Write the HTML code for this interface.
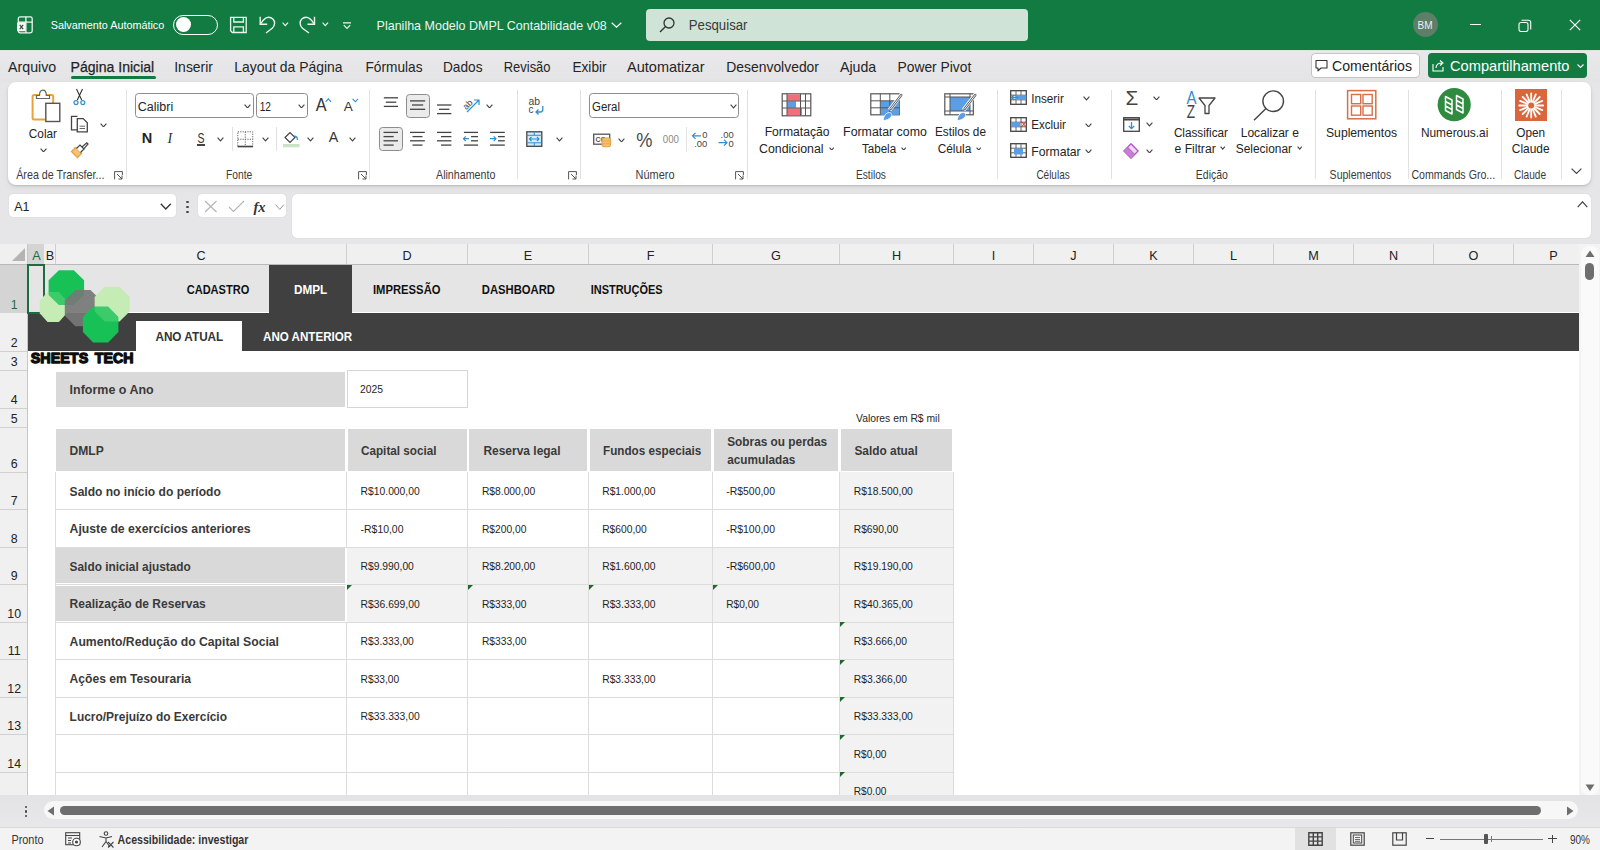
<!DOCTYPE html>
<html><head><meta charset="utf-8">
<style>
*{margin:0;padding:0;box-sizing:border-box}
html,body{width:1600px;height:850px;overflow:hidden;background:#e9e9eb;font-family:"Liberation Sans",sans-serif;color:#242424;position:relative}
.a{position:absolute;display:block}
.t{position:absolute;white-space:nowrap;line-height:1;transform-origin:0 0}
</style></head><body>
<div class="a" style="left:0px;top:0px;width:1600px;height:50px;background:#127b42;"></div>
<div class="a" style="left:0px;top:50px;width:1600px;height:32px;background:linear-gradient(#e9e8ec,#e4e4e5);"></div>
<div class="a" style="left:0px;top:50px;width:1600px;height:1px;background:#d5e8db;"></div>
<div class="a" style="left:0px;top:82px;width:1600px;height:162px;background:#e6e6e8;"></div>
<div class="a" style="left:8px;top:82px;width:1583px;height:103px;background:#ffffff;border-radius:8px;box-shadow:0 1px 2px rgba(0,0,0,.16),0 3px 6px rgba(0,0,0,.06)"></div>
<div class="a" style="left:9px;top:194px;width:167px;height:23px;background:#ffffff;border-radius:4px;box-shadow:0 0 1px rgba(0,0,0,.2)"></div>
<div class="a" style="left:198px;top:194px;width:88px;height:23px;background:#ffffff;border-radius:4px;box-shadow:0 0 1px rgba(0,0,0,.2)"></div>
<div class="a" style="left:292px;top:194px;width:1299px;height:44px;background:#ffffff;border-radius:5px;box-shadow:0 0 1px rgba(0,0,0,.2)"></div>
<div class="a" style="left:0px;top:244px;width:1579px;height:20px;background:#f0f0f0;"></div>
<div class="a" style="left:0px;top:264px;width:1579px;height:1px;background:#b9b9b9;"></div>
<div class="a" style="left:0px;top:265px;width:28px;height:530px;background:#f0f0f0;"></div>
<div class="a" style="left:27px;top:244px;width:1px;height:551px;background:#c6c6c6;"></div>
<div class="a" style="left:28px;top:265px;width:1551px;height:530px;background:#ffffff;"></div>
<div class="a" style="left:1579px;top:244px;width:21px;height:551px;background:#f3f3f3;"></div>
<div class="a" style="left:0px;top:827px;width:1600px;height:23px;background:#f3f3f3;"></div>
<div class="a" style="left:0px;top:827px;width:1600px;height:1px;background:#d9d9d9;"></div>
<div class="a" style="left:28px;top:265px;width:1551px;height:47px;background:#e5e5e5;"></div>
<div class="a" style="left:269px;top:265px;width:83px;height:48px;background:#404040;"></div>
<div class="a" style="left:28px;top:313px;width:1551px;height:38px;background:#404040;"></div>
<div class="a" style="left:136px;top:321px;width:106px;height:30px;background:#ffffff;"></div>
<div class="a" style="left:56px;top:372px;width:289px;height:35px;background:#d9d9d9;"></div>
<div class="a" style="left:347px;top:370px;width:121px;height:38px;background:#ffffff;border:1px solid #d6d6d6"></div>
<div class="a" style="left:840px;top:472px;width:113px;height:323px;background:#f2f2f2;"></div>
<div class="a" style="left:347px;top:547px;width:492px;height:75px;background:#f2f2f2;"></div>
<div class="a" style="left:55px;top:472px;width:1px;height:323px;background:#dcdcdc;"></div>
<div class="a" style="left:346px;top:472px;width:1px;height:323px;background:#dcdcdc;"></div>
<div class="a" style="left:467px;top:472px;width:1px;height:323px;background:#dcdcdc;"></div>
<div class="a" style="left:588px;top:472px;width:1px;height:323px;background:#dcdcdc;"></div>
<div class="a" style="left:712px;top:472px;width:1px;height:323px;background:#dcdcdc;"></div>
<div class="a" style="left:839px;top:472px;width:1px;height:323px;background:#dcdcdc;"></div>
<div class="a" style="left:953px;top:472px;width:1px;height:323px;background:#dcdcdc;"></div>
<div class="a" style="left:55px;top:509px;width:899px;height:1px;background:#dcdcdc;"></div>
<div class="a" style="left:55px;top:547px;width:899px;height:1px;background:#dcdcdc;"></div>
<div class="a" style="left:55px;top:584px;width:899px;height:1px;background:#dcdcdc;"></div>
<div class="a" style="left:55px;top:622px;width:899px;height:1px;background:#dcdcdc;"></div>
<div class="a" style="left:55px;top:659px;width:899px;height:1px;background:#dcdcdc;"></div>
<div class="a" style="left:55px;top:697px;width:899px;height:1px;background:#dcdcdc;"></div>
<div class="a" style="left:55px;top:734px;width:899px;height:1px;background:#dcdcdc;"></div>
<div class="a" style="left:55px;top:772px;width:899px;height:1px;background:#dcdcdc;"></div>
<div class="a" style="left:56px;top:429px;width:289px;height:42px;background:#d9d9d9;"></div>
<div class="a" style="left:348px;top:429px;width:119px;height:42px;background:#d9d9d9;"></div>
<div class="a" style="left:469px;top:429px;width:118px;height:42px;background:#d9d9d9;"></div>
<div class="a" style="left:590px;top:429px;width:121px;height:42px;background:#d9d9d9;"></div>
<div class="a" style="left:714px;top:429px;width:124px;height:42px;background:#d9d9d9;"></div>
<div class="a" style="left:841px;top:429px;width:111px;height:42px;background:#d9d9d9;"></div>
<div class="a" style="left:56px;top:548px;width:289px;height:35px;background:#d9d9d9;"></div>
<div class="a" style="left:56px;top:586px;width:289px;height:35px;background:#d9d9d9;"></div>
<div class="a" style="left:346px;top:548px;width:1px;height:74px;background:#ffffff;"></div>
<svg class="a" style="left:347px;top:584.5px;" width="5" height="5" viewBox="0 0 5 5"><path d="M0 0H5L0 5Z" fill="#1b6a2c"/></svg>
<svg class="a" style="left:468px;top:584.5px;" width="5" height="5" viewBox="0 0 5 5"><path d="M0 0H5L0 5Z" fill="#1b6a2c"/></svg>
<svg class="a" style="left:589px;top:584.5px;" width="5" height="5" viewBox="0 0 5 5"><path d="M0 0H5L0 5Z" fill="#1b6a2c"/></svg>
<svg class="a" style="left:713px;top:584.5px;" width="5" height="5" viewBox="0 0 5 5"><path d="M0 0H5L0 5Z" fill="#1b6a2c"/></svg>
<svg class="a" style="left:840px;top:622px;" width="5" height="5" viewBox="0 0 5 5"><path d="M0 0H5L0 5Z" fill="#1b6a2c"/></svg>
<svg class="a" style="left:840px;top:659.5px;" width="5" height="5" viewBox="0 0 5 5"><path d="M0 0H5L0 5Z" fill="#1b6a2c"/></svg>
<svg class="a" style="left:840px;top:697px;" width="5" height="5" viewBox="0 0 5 5"><path d="M0 0H5L0 5Z" fill="#1b6a2c"/></svg>
<svg class="a" style="left:840px;top:734.5px;" width="5" height="5" viewBox="0 0 5 5"><path d="M0 0H5L0 5Z" fill="#1b6a2c"/></svg>
<svg class="a" style="left:840px;top:772px;" width="5" height="5" viewBox="0 0 5 5"><path d="M0 0H5L0 5Z" fill="#1b6a2c"/></svg>
<div class="a" style="left:27px;top:264px;width:18px;height:50px;background:transparent;border:2px solid #1e6b41"></div>
<svg class="a" style="left:28px;top:264px;" width="110" height="86" viewBox="0 0 110 86"><polygon points="19.6,28.0 30.9,28.0 38.7,36.7 38.7,49.3 30.9,58.0 19.6,58.0 11.8,49.3 11.8,36.7" fill="#c6ecb4" fill-opacity="1"/><polygon points="30.9,6.2 45.8,6.2 56.1,16.3 56.1,31.0 45.8,41.1 30.9,41.1 20.6,31.0 20.6,16.3" fill="#17c155" fill-opacity="1"/><polygon points="19.6,28.0 30.9,28.0 38.7,36.7 38.7,49.3 30.9,58.0 19.6,58.0 11.8,49.3 11.8,36.7" fill="#c6ecb4" fill-opacity="0.22"/><polygon points="47.3,26.0 62.5,26.0 73.0,36.5 73.0,51.8 62.5,62.3 47.3,62.3 36.8,51.8 36.8,36.5" fill="#777777" fill-opacity="0.92"/><polygon points="76.8,23.0 91.5,23.0 101.6,33.0 101.6,47.4 91.5,57.4 76.8,57.4 66.7,47.4 66.7,33.0" fill="#c6ecb4" fill-opacity="1"/><polygon points="65.2,42.4 80.1,42.4 90.4,52.9 90.4,68.0 80.1,78.5 65.2,78.5 54.9,68.0 54.9,52.9" fill="#17c155" fill-opacity="1"/><polygon points="76.8,23.0 91.5,23.0 101.6,33.0 101.6,47.4 91.5,57.4 76.8,57.4 66.7,47.4 66.7,33.0" fill="#c6ecb4" fill-opacity="0.22"/></svg>
<div class="a" style="left:28px;top:244px;width:16px;height:20px;background:#d4d4d4;"></div>
<div class="a" style="left:55px;top:244px;width:1px;height:20px;background:#cfcfcf;"></div>
<div class="a" style="left:346px;top:244px;width:1px;height:20px;background:#cfcfcf;"></div>
<div class="a" style="left:467px;top:244px;width:1px;height:20px;background:#cfcfcf;"></div>
<div class="a" style="left:588px;top:244px;width:1px;height:20px;background:#cfcfcf;"></div>
<div class="a" style="left:712px;top:244px;width:1px;height:20px;background:#cfcfcf;"></div>
<div class="a" style="left:839px;top:244px;width:1px;height:20px;background:#cfcfcf;"></div>
<div class="a" style="left:953px;top:244px;width:1px;height:20px;background:#cfcfcf;"></div>
<div class="a" style="left:1033px;top:244px;width:1px;height:20px;background:#cfcfcf;"></div>
<div class="a" style="left:1113px;top:244px;width:1px;height:20px;background:#cfcfcf;"></div>
<div class="a" style="left:1193px;top:244px;width:1px;height:20px;background:#cfcfcf;"></div>
<div class="a" style="left:1273px;top:244px;width:1px;height:20px;background:#cfcfcf;"></div>
<div class="a" style="left:1353px;top:244px;width:1px;height:20px;background:#cfcfcf;"></div>
<div class="a" style="left:1433px;top:244px;width:1px;height:20px;background:#cfcfcf;"></div>
<div class="a" style="left:1513px;top:244px;width:1px;height:20px;background:#cfcfcf;"></div>
<div class="a" style="left:0px;top:265px;width:27px;height:48px;background:#d4d4d4;"></div>
<svg class="a" style="left:12px;top:248px;" width="14" height="14" viewBox="0 0 14 14"><path d="M13 0V13H0Z" fill="#b4b4b4"/></svg>
<div class="a" style="left:0px;top:351px;width:27px;height:1px;background:#d0d0d0;"></div>
<div class="a" style="left:0px;top:370px;width:27px;height:1px;background:#d0d0d0;"></div>
<div class="a" style="left:0px;top:408px;width:27px;height:1px;background:#d0d0d0;"></div>
<div class="a" style="left:0px;top:427px;width:27px;height:1px;background:#d0d0d0;"></div>
<div class="a" style="left:0px;top:472px;width:27px;height:1px;background:#d0d0d0;"></div>
<div class="a" style="left:0px;top:509px;width:27px;height:1px;background:#d0d0d0;"></div>
<div class="a" style="left:0px;top:547px;width:27px;height:1px;background:#d0d0d0;"></div>
<div class="a" style="left:0px;top:584px;width:27px;height:1px;background:#d0d0d0;"></div>
<div class="a" style="left:0px;top:622px;width:27px;height:1px;background:#d0d0d0;"></div>
<div class="a" style="left:0px;top:659px;width:27px;height:1px;background:#d0d0d0;"></div>
<div class="a" style="left:0px;top:697px;width:27px;height:1px;background:#d0d0d0;"></div>
<div class="a" style="left:0px;top:734px;width:27px;height:1px;background:#d0d0d0;"></div>
<div class="a" style="left:0px;top:772px;width:27px;height:1px;background:#d0d0d0;"></div>
<svg class="a" style="left:16px;top:16px;" width="18" height="18" viewBox="0 0 18 18"><rect x="2.3" y="0.9" width="13.9" height="16" rx="1.8" fill="none" stroke="#eaf7ee" stroke-width="1.3"/><path d="M9.9 0.9V16.9M2.3 6.2H16.2" stroke="#eaf7ee" stroke-width="1.3"/><rect x="1" y="6.2" width="8.7" height="9" rx="1.2" fill="#f4fbf6"/><path d="M3.8 8.8L7.2 13.2M7.2 8.8L3.8 13.2" stroke="#444" stroke-width="1.2"/></svg>
<div class="a" style="left:172.5px;top:14.5px;width:45.0px;height:20.0px;background:transparent;border:1.5px solid #fff;border-radius:10px"></div>
<div class="a" style="left:175.5px;top:17px;width:15.0px;height:15px;background:#ffffff;border-radius:50%"></div>
<svg class="a" style="left:226px;top:12px;" width="26" height="26" viewBox="0 0 26 26"><path d="M 4.60 5.30 H 20.20 V 20.50 H 6.30 L 4.60 18.80 Z" fill="none" stroke="#eaf7ee" stroke-width="1.3"/><path d="M 7.80 5.30 V 10.00 H 17.40 V 5.30 M 7.80 20.50 V 14.80 H 17.40 V 20.50" fill="none" stroke="#eaf7ee" stroke-width="1.3"/></svg>
<svg class="a" style="left:256px;top:12px;" width="24" height="26" viewBox="0 0 24 26"><path d="M 4.20 4.80 V 12.20 H 11.20" fill="none" stroke="#eaf7ee" stroke-width="1.4"/><path d="M 4.90 11.50 C 7.50 7.20 10.00 5.30 12.60 5.30 C 16.00 5.30 18.60 8.00 18.60 11.20 C 18.60 13.20 17.60 14.80 16.20 16.20 L 10.00 21.00" fill="none" stroke="#eaf7ee" stroke-width="1.4"/></svg>
<svg class="a" style="left:281.5px;top:22px;" width="7" height="5" viewBox="0 0 7 5"><path d="M0.6 0.6L3.3 3.6L6 0.6" fill="none" stroke="#eaf7ee" stroke-width="1.2"/></svg>
<svg class="a" style="left:296px;top:12px;" width="24" height="26" viewBox="0 0 24 26"><path d="M 18.50 4.80 V 12.20 H 11.50" fill="none" stroke="#eaf7ee" stroke-width="1.4"/><path d="M 17.80 11.50 C 15.20 7.20 12.70 5.30 10.10 5.30 C 6.70 5.30 4.10 8.00 4.10 11.20 C 4.10 13.20 5.10 14.80 6.50 16.20 L 13.00 21.00" fill="none" stroke="#eaf7ee" stroke-width="1.4"/></svg>
<svg class="a" style="left:321.5px;top:22px;" width="7" height="5" viewBox="0 0 7 5"><path d="M0.6 0.6L3.3 3.6L6 0.6" fill="none" stroke="#eaf7ee" stroke-width="1.2"/></svg>
<svg class="a" style="left:342px;top:21px;" width="10" height="9" viewBox="0 0 10 9"><path d="M1 1.8H9M1.8 4.2L5 7.4L8.2 4.2" fill="none" stroke="#eaf7ee" stroke-width="1.2"/></svg>
<svg class="a" style="left:611px;top:22px;" width="11" height="6" viewBox="0 0 11 6"><path d="M0.7 0.7L5.5 5.2L10.3 0.7" fill="none" stroke="#fff" stroke-width="1.2"/></svg>
<div class="a" style="left:645.5px;top:8.75px;width:382.0px;height:32.0px;background:#cfe4d6;border-radius:4px"></div>
<svg class="a" style="left:659px;top:17px;" width="16" height="16" viewBox="0 0 16 16"><circle cx="10" cy="6" r="5" fill="none" stroke="#333" stroke-width="1.3"/><path d="M6.3 9.7L1 15" stroke="#333" stroke-width="1.4"/></svg>
<div class="a" style="left:1412.5px;top:12px;width:25.0px;height:25px;background:#5e7e69;border-radius:50%"></div>
<div class="a" style="left:1469.5px;top:24px;width:11.0px;height:1.1999999999999993px;background:#ffffff;"></div>
<svg class="a" style="left:1518px;top:19px;" width="14" height="13" viewBox="0 0 14 13"><rect x="1" y="3.5" width="9" height="9" rx="2" fill="none" stroke="#fff" stroke-width="1.1"/><path d="M3.5 1.2H10.5C11.7 1.2 12.7 2.2 12.7 3.4V10.5" fill="none" stroke="#fff" stroke-width="1.1"/></svg>
<svg class="a" style="left:1569px;top:19px;" width="12" height="12" viewBox="0 0 12 12"><path d="M0.8 0.8L11.2 11.2M11.2 0.8L0.8 11.2" stroke="#fff" stroke-width="1.2"/></svg>
<div class="a" style="left:70.5px;top:76px;width:85.0px;height:3px;background:#127b42;border-radius:1.5px"></div>
<div class="a" style="left:1310.5px;top:53px;width:109.0px;height:25px;background:#ffffff;border:1px solid #c4c4c4;border-radius:4px"></div>
<svg class="a" style="left:1315px;top:59px;" width="13" height="13" viewBox="0 0 13 13"><path d="M1 1.5H12V9H6L3 11.8V9H1Z" fill="none" stroke="#333" stroke-width="1.1" stroke-linejoin="round"/></svg>
<div class="a" style="left:1428px;top:53px;width:159px;height:25px;background:#127b42;border-radius:4px"></div>
<svg class="a" style="left:1432px;top:59px;" width="13" height="13" viewBox="0 0 13 13"><path d="M1 5V12H11V8" fill="none" stroke="#fff" stroke-width="1.1"/><path d="M4 9C4 5.5 6.5 4 10 4M8 1.5L11 4L8 6.5" fill="none" stroke="#fff" stroke-width="1.1"/></svg>
<svg class="a" style="left:1577px;top:64px;" width="7" height="5" viewBox="0 0 7 5"><path d="M0.5 0.5L3.5 3.5L6.5 0.5" fill="none" stroke="#fff" stroke-width="1.1"/></svg>
<svg class="a" style="left:114px;top:170.5px;" width="9" height="9" viewBox="0 0 9 9"><path d="M0.6 8.4V0.6H8.4V4" fill="none" stroke="#555" stroke-width="1"/><path d="M3 3L8 8M8 4.5V8H4.5" fill="none" stroke="#555" stroke-width="1"/></svg>
<svg class="a" style="left:357.5px;top:170.5px;" width="9" height="9" viewBox="0 0 9 9"><path d="M0.6 8.4V0.6H8.4V4" fill="none" stroke="#555" stroke-width="1"/><path d="M3 3L8 8M8 4.5V8H4.5" fill="none" stroke="#555" stroke-width="1"/></svg>
<svg class="a" style="left:568.3px;top:170.5px;" width="9" height="9" viewBox="0 0 9 9"><path d="M0.6 8.4V0.6H8.4V4" fill="none" stroke="#555" stroke-width="1"/><path d="M3 3L8 8M8 4.5V8H4.5" fill="none" stroke="#555" stroke-width="1"/></svg>
<svg class="a" style="left:734.6px;top:170.5px;" width="9" height="9" viewBox="0 0 9 9"><path d="M0.6 8.4V0.6H8.4V4" fill="none" stroke="#555" stroke-width="1"/><path d="M3 3L8 8M8 4.5V8H4.5" fill="none" stroke="#555" stroke-width="1"/></svg>
<div class="a" style="left:126px;top:90px;width:1px;height:89px;background:#e1e1e1;"></div>
<div class="a" style="left:369px;top:90px;width:1px;height:89px;background:#e1e1e1;"></div>
<div class="a" style="left:516.5px;top:90px;width:1.0px;height:89px;background:#e1e1e1;"></div>
<div class="a" style="left:580px;top:90px;width:1px;height:89px;background:#e1e1e1;"></div>
<div class="a" style="left:747px;top:90px;width:1px;height:89px;background:#e1e1e1;"></div>
<div class="a" style="left:997px;top:90px;width:1px;height:89px;background:#e1e1e1;"></div>
<div class="a" style="left:1110.5px;top:90px;width:1.0px;height:89px;background:#e1e1e1;"></div>
<div class="a" style="left:1314.5px;top:90px;width:1.0px;height:89px;background:#e1e1e1;"></div>
<div class="a" style="left:1407.5px;top:90px;width:1.0px;height:89px;background:#e1e1e1;"></div>
<div class="a" style="left:1500.5px;top:90px;width:1.0px;height:89px;background:#e1e1e1;"></div>
<div class="a" style="left:1560.5px;top:90px;width:1.0px;height:89px;background:#e1e1e1;"></div>
<svg class="a" style="left:30px;top:89px;" width="32" height="34" viewBox="0 0 32 34"><rect x="2.6" y="5.9" width="20.6" height="24.5" rx="1.5" fill="#fff" stroke="#e8a33a" stroke-width="2"/><path d="M6.5 9.5V6.5H9.5C9.5 2.8 10.8 1.2 12.9 1.2C15 1.2 16.3 2.8 16.3 6.5H19.5V9.5Z" fill="#fff" stroke="#666" stroke-width="1.2"/><rect x="15.8" y="14.3" width="14" height="18.2" fill="#fff" stroke="#555" stroke-width="1.4"/></svg>
<svg class="a" style="left:39.6px;top:147.5px;" width="7" height="4.5" viewBox="0 0 7 4.5"><path d="M0.6 0.6L3.5 3.9L6.4 0.6" fill="none" stroke="#444" stroke-width="1.1"/></svg>
<svg class="a" style="left:73px;top:88px;" width="13" height="18" viewBox="0 0 13 18"><path d="M3.5 1L8.7 12M9.5 1L4.3 12" stroke="#333" stroke-width="1.1"/><circle cx="3" cy="14.6" r="2" fill="none" stroke="#2f8fd0" stroke-width="1.2"/><circle cx="9.8" cy="14.6" r="2" fill="none" stroke="#2f8fd0" stroke-width="1.2"/></svg>
<svg class="a" style="left:70px;top:115px;" width="19" height="19" viewBox="0 0 19 19"><path d="M8 14.8H1.5V1.3H7.5" fill="none" stroke="#444" stroke-width="1.3"/><path d="M7.3 3.6H13.2L17.3 7.7V16.8H7.3Z" fill="#fff" stroke="#444" stroke-width="1.3"/><path d="M9.5 11.2H15M9.5 13.5H15" stroke="#666" stroke-width="1"/></svg>
<svg class="a" style="left:100.3px;top:122.5px;" width="7" height="4.5" viewBox="0 0 7 4.5"><path d="M0.6 0.6L3.5 3.9L6.4 0.6" fill="none" stroke="#444" stroke-width="1.1"/></svg>
<svg class="a" style="left:70px;top:142px;" width="19" height="17" viewBox="0 0 19 17"><path d="M1.5 9.5L7.5 15.5L11.5 11.5L5.5 5.5Z" fill="#f6c27a" stroke="#e8a33a" stroke-width="1.3"/><path d="M6.5 6.5L10 3L14 7L10.5 10.5" fill="#fff" stroke="#444" stroke-width="1.2"/><path d="M12 5L16.8 0.8L18 2L13.8 6.8" fill="none" stroke="#444" stroke-width="1.2"/></svg>
<div class="a" style="left:135.25px;top:93.25px;width:118.5px;height:24.450000000000003px;background:#fff;border:1px solid #8d8d8d;border-radius:3.5px"></div>
<svg class="a" style="left:244.2px;top:103.7px;" width="7" height="4.5" viewBox="0 0 7 4.5"><path d="M0.6 0.6L3.5 3.9L6.4 0.6" fill="none" stroke="#444" stroke-width="1.1"/></svg>
<div class="a" style="left:256.4px;top:93.25px;width:51.30000000000001px;height:24.450000000000003px;background:#fff;border:1px solid #8d8d8d;border-radius:3.5px"></div>
<svg class="a" style="left:298.2px;top:103.7px;" width="7" height="4.5" viewBox="0 0 7 4.5"><path d="M0.6 0.6L3.5 3.9L6.4 0.6" fill="none" stroke="#444" stroke-width="1.1"/></svg>
<svg class="a" style="left:325px;top:98px;" width="7" height="5" viewBox="0 0 7 5"><path d="M0.6 3.8L3.3 0.8L6 3.8" fill="none" stroke="#2f8fd0" stroke-width="1.1"/></svg>
<svg class="a" style="left:352px;top:98px;" width="7" height="5" viewBox="0 0 7 5"><path d="M0.6 0.8L3.3 3.8L6 0.8" fill="none" stroke="#2f8fd0" stroke-width="1.1"/></svg>
<div class="a" style="left:196.75px;top:144.25px;width:8.25px;height:1.3499999999999943px;background:#444;"></div>
<svg class="a" style="left:216.8px;top:137.0px;" width="7" height="4.5" viewBox="0 0 7 4.5"><path d="M0.6 0.6L3.5 3.9L6.4 0.6" fill="none" stroke="#444" stroke-width="1.1"/></svg>
<div class="a" style="left:231.5px;top:127px;width:1.0px;height:24px;background:#e1e1e1;"></div>
<svg class="a" style="left:237px;top:130.5px;" width="17" height="17" viewBox="0 0 17 17"><path d="M0.8 0.8H15.7V15.7H0.8Z" fill="none" stroke="#666" stroke-width="1" stroke-dasharray="1.2 1.2"/><path d="M8.25 0.8V15.7M0.8 8.25H15.7" stroke="#666" stroke-width="1" stroke-dasharray="1.2 1.2"/><path d="M0.5 15.5H16" stroke="#444" stroke-width="1.6"/></svg>
<svg class="a" style="left:261.8px;top:137.0px;" width="7" height="4.5" viewBox="0 0 7 4.5"><path d="M0.6 0.6L3.5 3.9L6.4 0.6" fill="none" stroke="#444" stroke-width="1.1"/></svg>
<div class="a" style="left:276.3px;top:127px;width:1.0px;height:24px;background:#e1e1e1;"></div>
<svg class="a" style="left:283px;top:130.5px;" width="17" height="17" viewBox="0 0 17 17"><path d="M3 6.5L8 1.5L13 6.5L8 11.5Z" fill="#fff" stroke="#444" stroke-width="1.2" transform="translate(-1,0)"/><path d="M10.5 5.5C13 4.5 14.5 6 14.5 9" fill="none" stroke="#2f8fd0" stroke-width="1.3"/><rect x="0" y="13" width="16.5" height="3.3" fill="#c9e3c4"/></svg>
<svg class="a" style="left:306.8px;top:137.0px;" width="7" height="4.5" viewBox="0 0 7 4.5"><path d="M0.6 0.6L3.5 3.9L6.4 0.6" fill="none" stroke="#444" stroke-width="1.1"/></svg>
<svg class="a" style="left:349.2px;top:137.0px;" width="7" height="4.5" viewBox="0 0 7 4.5"><path d="M0.6 0.6L3.5 3.9L6.4 0.6" fill="none" stroke="#444" stroke-width="1.1"/></svg>
<svg class="a" style="left:380px;top:92px;" width="20" height="20" viewBox="0 0 20 20"><path d="M3.8 5.8H18" stroke="#444" stroke-width="1.3"/><path d="M5.8 10.2H16.3" stroke="#444" stroke-width="1.3"/><path d="M3.8 14.4H18" stroke="#444" stroke-width="1.3"/></svg>
<div class="a" style="left:405.5px;top:93.5px;width:24.0px;height:24.0px;background:#ebebeb;border:1px solid #8d8d8d;border-radius:3.5px"></div>
<svg class="a" style="left:405px;top:92px;" width="25" height="22" viewBox="0 0 25 22"><path d="M5 8.9H20.2" stroke="#444" stroke-width="1.3"/><path d="M7 13H18.2" stroke="#444" stroke-width="1.3"/><path d="M5 17.3H20.2" stroke="#444" stroke-width="1.3"/></svg>
<svg class="a" style="left:434px;top:92px;" width="20" height="25" viewBox="0 0 20 25"><path d="M3 13H17.4" stroke="#444" stroke-width="1.3"/><path d="M5 17.3H15.4" stroke="#444" stroke-width="1.3"/><path d="M3 21.6H17.4" stroke="#444" stroke-width="1.3"/></svg>
<svg class="a" style="left:462px;top:96px;" width="18" height="17" viewBox="0 0 18 17"><text x="0" y="12" font-size="9" font-family="Liberation Sans" fill="#444" transform="rotate(-45 5 8)">ab</text><path d="M5 16L16.5 4.5M12 4H17V9" fill="none" stroke="#2f8fd0" stroke-width="1.2"/></svg>
<svg class="a" style="left:485.5px;top:103.9px;" width="7" height="4.5" viewBox="0 0 7 4.5"><path d="M0.6 0.6L3.5 3.9L6.4 0.6" fill="none" stroke="#444" stroke-width="1.1"/></svg>
<svg class="a" style="left:527px;top:96px;" width="19" height="19" viewBox="0 0 19 19"><text x="1.5" y="9" font-size="10" font-family="Liberation Sans" fill="#444" textLength="11.5" lengthAdjust="spacingAndGlyphs">ab</text><text x="1.5" y="17.3" font-size="10" font-family="Liberation Sans" fill="#444">c</text><path d="M15.8 10V13.5C15.8 15.2 14.8 16 13.3 16H9M11.5 13.5L9 16L11.5 18.5" fill="none" stroke="#2f8fd0" stroke-width="1.3"/></svg>
<div class="a" style="left:378.6px;top:127.1px;width:24.19999999999999px;height:24.200000000000017px;background:#ebebeb;border:1px solid #8d8d8d;border-radius:3.5px"></div>
<svg class="a" style="left:378px;top:126px;" width="25" height="25" viewBox="0 0 25 25"><path d="M5.5 6.4H20" stroke="#444" stroke-width="1.3"/><path d="M5.5 10.6H15.7" stroke="#444" stroke-width="1.3"/><path d="M5.5 14.8H20" stroke="#444" stroke-width="1.3"/><path d="M5.5 19.1H15.7" stroke="#444" stroke-width="1.3"/></svg>
<svg class="a" style="left:408px;top:126px;" width="20" height="25" viewBox="0 0 20 25"><path d="M2 6.4H16.8" stroke="#444" stroke-width="1.3"/><path d="M4.5 10.6H14.5" stroke="#444" stroke-width="1.3"/><path d="M2 14.8H16.8" stroke="#444" stroke-width="1.3"/><path d="M4.5 19.1H14.5" stroke="#444" stroke-width="1.3"/></svg>
<svg class="a" style="left:435px;top:126px;" width="20" height="25" viewBox="0 0 20 25"><path d="M2 6.4H16.4" stroke="#444" stroke-width="1.3"/><path d="M6 10.6H16.4" stroke="#444" stroke-width="1.3"/><path d="M2 14.8H16.4" stroke="#444" stroke-width="1.3"/><path d="M6 19.1H16.4" stroke="#444" stroke-width="1.3"/></svg>
<svg class="a" style="left:462px;top:126px;" width="20" height="25" viewBox="0 0 20 25"><path d="M1.9 6.4H16" stroke="#444" stroke-width="1.3"/><path d="M1.9 19.1H16" stroke="#444" stroke-width="1.3"/><path d="M9 10.6H16" stroke="#444" stroke-width="1.3"/><path d="M9 14.8H16" stroke="#444" stroke-width="1.3"/><path d="M1.5 12.7H7M3.8 10.3L1.5 12.7L3.8 15.1" fill="none" stroke="#2f8fd0" stroke-width="1.2"/></svg>
<svg class="a" style="left:488px;top:126px;" width="20" height="25" viewBox="0 0 20 25"><path d="M2.1 6.4H16.8" stroke="#444" stroke-width="1.3"/><path d="M2.1 19.1H16.8" stroke="#444" stroke-width="1.3"/><path d="M10 10.6H16.8" stroke="#444" stroke-width="1.3"/><path d="M10 14.8H16.8" stroke="#444" stroke-width="1.3"/><path d="M2 12.7H8M5.7 10.3L8 12.7L5.7 15.1" fill="none" stroke="#2f8fd0" stroke-width="1.2"/></svg>
<svg class="a" style="left:526px;top:130.5px;" width="17" height="17" viewBox="0 0 17 17"><rect x="0.8" y="0.8" width="15" height="14.5" fill="#d6ebf7" stroke="#444" stroke-width="1.3"/><path d="M0.8 4.3H15.8M0.8 11.8H15.8M8.3 0.8V4.3M8.3 11.8V15.3" stroke="#2f8fd0" stroke-width="1"/><path d="M3.5 8H13M5.5 6L3.5 8L5.5 10M11 6L13 8L11 10" fill="none" stroke="#2f8fd0" stroke-width="1.1"/></svg>
<svg class="a" style="left:556.3px;top:137.1px;" width="7" height="4.5" viewBox="0 0 7 4.5"><path d="M0.6 0.6L3.5 3.9L6.4 0.6" fill="none" stroke="#444" stroke-width="1.1"/></svg>
<div class="a" style="left:589.2px;top:93.3px;width:149.54999999999995px;height:24.700000000000003px;background:#fff;border:1px solid #8d8d8d;border-radius:3.5px"></div>
<svg class="a" style="left:729.5px;top:104.0px;" width="7" height="4.5" viewBox="0 0 7 4.5"><path d="M0.6 0.6L3.5 3.9L6.4 0.6" fill="none" stroke="#444" stroke-width="1.1"/></svg>
<svg class="a" style="left:593px;top:133px;" width="19" height="15" viewBox="0 0 19 15"><rect x="0.7" y="1.2" width="16" height="10" fill="#fff" stroke="#555" stroke-width="1.3"/><text x="2.5" y="9" font-size="7" font-family="Liberation Sans" fill="#555" font-weight="700">CC</text><rect x="9" y="5" width="8.5" height="8.8" rx="2.5" fill="#f6c27a" stroke="#e8a33a" stroke-width="1.1"/><path d="M9 8H17.5M9 10.8H17.5" stroke="#e8a33a" stroke-width="0.9"/></svg>
<svg class="a" style="left:618.2px;top:137.5px;" width="7" height="4.5" viewBox="0 0 7 4.5"><path d="M0.6 0.6L3.5 3.9L6.4 0.6" fill="none" stroke="#444" stroke-width="1.1"/></svg>
<div class="a" style="left:685.5px;top:127px;width:1.0px;height:24.5px;background:#e1e1e1;"></div>
<svg class="a" style="left:691px;top:130px;" width="19" height="18" viewBox="0 0 19 18"><path d="M1.5 5.8H10M4.5 2.8L1.5 5.8L4.5 8.8" fill="none" stroke="#2f8fd0" stroke-width="1.2"/><text x="11.3" y="8.3" font-size="9.4" font-family="Liberation Sans" fill="#444">0</text><text x="3.2" y="16.8" font-size="9.4" font-family="Liberation Sans" fill="#444">.00</text></svg>
<svg class="a" style="left:717px;top:130px;" width="19" height="18" viewBox="0 0 19 18"><text x="3.6" y="8.3" font-size="9.4" font-family="Liberation Sans" fill="#444">.00</text><path d="M1.5 12.7H10M7 9.7L10 12.7L7 15.7" fill="none" stroke="#2f8fd0" stroke-width="1.2"/><text x="11.6" y="16.8" font-size="9.4" font-family="Liberation Sans" fill="#444">0</text></svg>
<svg class="a" style="left:781px;top:93px;" width="31" height="24" viewBox="0 0 31 24"><rect x="1.2" y="0.8" width="28.6" height="22" fill="#fff" stroke="#555" stroke-width="1.2"/><rect x="6" y="1.3" width="13" height="6.5" fill="#f0707a"/><rect x="6" y="8.3" width="9" height="6.5" fill="#5b9ee6"/><rect x="6" y="15.2" width="15" height="7" fill="#f0707a"/><path d="M1.2 8H29.8M1.2 15H29.8M6 0.8V22.8M19.5 0.8V22.8M24.5 0.8V22.8" stroke="#555" stroke-width="1"/></svg>
<svg class="a" style="left:828.5px;top:146.8px;" width="5.5" height="3.7" viewBox="0 0 5.5 3.7"><path d="M0.6 0.6L2.75 3.1L4.9 0.6" fill="none" stroke="#444" stroke-width="1.1"/></svg>
<svg class="a" style="left:870px;top:93px;" width="33" height="29" viewBox="0 0 33 29"><rect x="0.8" y="0.8" width="28.5" height="21" fill="#fff" stroke="#555" stroke-width="1.2"/><rect x="10.5" y="8" width="18.8" height="13.8" fill="#5b9ee6"/><path d="M0.8 7.8H29.3M0.8 14.8H29.3M10.3 0.8V21.8M19.8 0.8V21.8" stroke="#555" stroke-width="1"/><path d="M31.5 1.5L19.5 17" stroke="#fff" stroke-width="4"/><path d="M31.3 2L20.5 16" stroke="#555" stroke-width="2.4" stroke-linecap="round"/><path d="M31.3 2L20.5 16" stroke="#fff" stroke-width="1" stroke-linecap="round"/><path d="M13 27.5C14 23 15.5 20 19 19.5C21.5 19.5 22.5 22 21 24C19.5 26 16 27.5 13 27.5Z" fill="#5b9ee6" stroke="#fff" stroke-width="0.8"/></svg>
<svg class="a" style="left:901.1px;top:146.8px;" width="5.5" height="3.7" viewBox="0 0 5.5 3.7"><path d="M0.6 0.6L2.75 3.1L4.9 0.6" fill="none" stroke="#444" stroke-width="1.1"/></svg>
<svg class="a" style="left:944px;top:93px;" width="33" height="29" viewBox="0 0 33 29"><rect x="0.8" y="0.8" width="28.5" height="21" fill="#fff" stroke="#555" stroke-width="1.2"/><rect x="6" y="4" width="20" height="14" fill="#5b9ee6"/><path d="M0.8 4H29.3M0.8 18H29.3M6 0.8V21.8M26 0.8V21.8" stroke="#555" stroke-width="1"/><path d="M31.5 1.5L19.5 17" stroke="#fff" stroke-width="4"/><path d="M31.3 2L20.5 16" stroke="#555" stroke-width="2.4" stroke-linecap="round"/><path d="M31.3 2L20.5 16" stroke="#fff" stroke-width="1" stroke-linecap="round"/><path d="M13 27.5C14 23 15.5 20 19 19.5C21.5 19.5 22.5 22 21 24C19.5 26 16 27.5 13 27.5Z" fill="#5b9ee6" stroke="#fff" stroke-width="0.8"/></svg>
<svg class="a" style="left:975.9px;top:146.8px;" width="5.5" height="3.7" viewBox="0 0 5.5 3.7"><path d="M0.6 0.6L2.75 3.1L4.9 0.6" fill="none" stroke="#444" stroke-width="1.1"/></svg>
<svg class="a" style="left:1010px;top:89.8px;" width="17" height="16" viewBox="0 0 17 16"><rect x="0.7" y="0.7" width="15.6" height="13.6" fill="#fff" stroke="#444" stroke-width="1.3"/><path d="M0.7 5.2H16.3M0.7 9.8H16.3M6 0.7V14.3M11 0.7V14.3" stroke="#555" stroke-width="0.9"/><rect x="6" y="5.2" width="10.3" height="4.6" fill="#5b9ee6"/><path d="M1.5 7.5H8M4 5L1.5 7.5L4 10" fill="none" stroke="#2f8fd0" stroke-width="1.3"/></svg>
<svg class="a" style="left:1010px;top:116.8px;" width="17" height="16" viewBox="0 0 17 16"><rect x="0.7" y="0.7" width="15.6" height="13.6" fill="#fff" stroke="#444" stroke-width="1.3"/><path d="M0.7 5.2H16.3M0.7 9.8H16.3M6 0.7V14.3M11 0.7V14.3" stroke="#555" stroke-width="0.9"/><rect x="1" y="5.2" width="9" height="4.6" fill="#5b9ee6"/><path d="M11.5 4.5L16 10M16 4.5L11.5 10" stroke="#e04040" stroke-width="1.1"/></svg>
<svg class="a" style="left:1010px;top:143px;" width="17" height="16" viewBox="0 0 17 16"><rect x="0.7" y="0.7" width="15.6" height="13.6" fill="#fff" stroke="#444" stroke-width="1.3"/><path d="M0.7 5.2H16.3M0.7 9.8H16.3M6 0.7V14.3M11 0.7V14.3" stroke="#555" stroke-width="0.9"/><rect x="4" y="5.5" width="9" height="6" fill="#5b9ee6"/><path d="M3 -0.5H14" stroke="#2f8fd0" stroke-width="1"/></svg>
<svg class="a" style="left:1082.5px;top:96.0px;" width="7" height="4.5" viewBox="0 0 7 4.5"><path d="M0.6 0.6L3.5 3.9L6.4 0.6" fill="none" stroke="#444" stroke-width="1.1"/></svg>
<svg class="a" style="left:1085.3px;top:122.7px;" width="7" height="4.5" viewBox="0 0 7 4.5"><path d="M0.6 0.6L3.5 3.9L6.4 0.6" fill="none" stroke="#444" stroke-width="1.1"/></svg>
<svg class="a" style="left:1084.6px;top:148.6px;" width="7" height="4.5" viewBox="0 0 7 4.5"><path d="M0.6 0.6L3.5 3.9L6.4 0.6" fill="none" stroke="#444" stroke-width="1.1"/></svg>
<svg class="a" style="left:1152.75px;top:95.75px;" width="7" height="4.5" viewBox="0 0 7 4.5"><path d="M0.6 0.6L3.5 3.9L6.4 0.6" fill="none" stroke="#444" stroke-width="1.1"/></svg>
<svg class="a" style="left:1123px;top:117px;" width="17" height="15" viewBox="0 0 17 15"><rect x="0.7" y="0.7" width="15.6" height="13.6" fill="#fff" stroke="#444" stroke-width="1.3"/><path d="M0.7 2.5H16.3" stroke="#444" stroke-width="2"/><path d="M8.5 5V11.5M5.8 9L8.5 11.7L11.2 9" fill="none" stroke="#2f8fd0" stroke-width="1.3"/></svg>
<svg class="a" style="left:1146.25px;top:122.25px;" width="7" height="4.5" viewBox="0 0 7 4.5"><path d="M0.6 0.6L3.5 3.9L6.4 0.6" fill="none" stroke="#444" stroke-width="1.1"/></svg>
<svg class="a" style="left:1123px;top:143px;" width="16" height="16" viewBox="0 0 16 16"><path d="M8 0.8L15.2 8L8 15.2L0.8 8Z" fill="#f0d6f4" stroke="#b04fc0" stroke-width="1.3"/><path d="M4.4 4.4L11.6 11.6" stroke="#b04fc0" stroke-width="1.2"/><path d="M0.8 8L4.4 4.4L11.6 11.6L8 15.2Z" fill="#c77fd3"/></svg>
<svg class="a" style="left:1146.25px;top:148.75px;" width="7" height="4.5" viewBox="0 0 7 4.5"><path d="M0.6 0.6L3.5 3.9L6.4 0.6" fill="none" stroke="#444" stroke-width="1.1"/></svg>
<svg class="a" style="left:1198px;top:97px;" width="19" height="18" viewBox="0 0 19 18"><path d="M1 1H17L11 8.5V16.5H7V8.5Z" fill="#fff" stroke="#444" stroke-width="1.3" stroke-linejoin="round"/></svg>
<svg class="a" style="left:1220.0px;top:146.0px;" width="5.5" height="3.7" viewBox="0 0 5.5 3.7"><path d="M0.6 0.6L2.75 3.1L4.9 0.6" fill="none" stroke="#444" stroke-width="1.1"/></svg>
<svg class="a" style="left:1252px;top:89px;" width="33" height="33" viewBox="0 0 33 33"><circle cx="21.2" cy="12.2" r="10.3" fill="#fff" stroke="#444" stroke-width="1.4"/><path d="M14 19.6L2 31.3" stroke="#444" stroke-width="1.4"/></svg>
<svg class="a" style="left:1296.5px;top:146.0px;" width="5.5" height="3.7" viewBox="0 0 5.5 3.7"><path d="M0.6 0.6L2.75 3.1L4.9 0.6" fill="none" stroke="#444" stroke-width="1.1"/></svg>
<svg class="a" style="left:1346px;top:89px;" width="32" height="32" viewBox="0 0 32 32"><rect x="1.6" y="1.6" width="28.2" height="28.2" fill="none" stroke="#d86f48" stroke-width="1.5"/><rect x="5.5" y="5.5" width="9.2" height="9.2" fill="none" stroke="#d86f48" stroke-width="1.4"/><rect x="17" y="5.5" width="9.2" height="9.2" fill="none" stroke="#d86f48" stroke-width="1.4"/><rect x="5.5" y="17" width="9.2" height="9.2" fill="none" stroke="#d86f48" stroke-width="1.4"/><rect x="17" y="17" width="9.2" height="9.2" fill="none" stroke="#d86f48" stroke-width="1.4"/></svg>
<svg class="a" style="left:1437px;top:88px;" width="34" height="34" viewBox="0 0 34 34"><circle cx="17.2" cy="16.7" r="16.6" fill="#2f8b3f"/><path d="M8.5 8.5L15 12V26L8.5 22.5ZM8.5 13.5L15 17M8.5 18L15 21.5M19.5 7.5L26 11V25L19.5 21.5ZM19.5 12.5L26 16M19.5 17L26 20.5" fill="none" stroke="#fff" stroke-width="1.5" stroke-linejoin="round"/></svg>
<div class="a" style="left:1515px;top:88.5px;width:32.40000000000009px;height:32.900000000000006px;background:#d9663c;"></div>
<svg class="a" style="left:1515px;top:88.5px;" width="33" height="33" viewBox="0 0 33 33"><path d="M16.2 16.5L28.20 16.50" stroke="#fff" stroke-width="1.8" stroke-linecap="round"/><path d="M16.2 16.5L27.29 21.09" stroke="#fff" stroke-width="1.8" stroke-linecap="round"/><path d="M16.2 16.5L24.69 24.99" stroke="#fff" stroke-width="1.8" stroke-linecap="round"/><path d="M16.2 16.5L20.79 27.59" stroke="#fff" stroke-width="1.8" stroke-linecap="round"/><path d="M16.2 16.5L16.20 28.50" stroke="#fff" stroke-width="1.8" stroke-linecap="round"/><path d="M16.2 16.5L11.61 27.59" stroke="#fff" stroke-width="1.8" stroke-linecap="round"/><path d="M16.2 16.5L7.71 24.99" stroke="#fff" stroke-width="1.8" stroke-linecap="round"/><path d="M16.2 16.5L5.11 21.09" stroke="#fff" stroke-width="1.8" stroke-linecap="round"/><path d="M16.2 16.5L4.20 16.50" stroke="#fff" stroke-width="1.8" stroke-linecap="round"/><path d="M16.2 16.5L5.11 11.91" stroke="#fff" stroke-width="1.8" stroke-linecap="round"/><path d="M16.2 16.5L7.71 8.01" stroke="#fff" stroke-width="1.8" stroke-linecap="round"/><path d="M16.2 16.5L11.61 5.41" stroke="#fff" stroke-width="1.8" stroke-linecap="round"/><path d="M16.2 16.5L16.20 4.50" stroke="#fff" stroke-width="1.8" stroke-linecap="round"/><path d="M16.2 16.5L20.79 5.41" stroke="#fff" stroke-width="1.8" stroke-linecap="round"/><path d="M16.2 16.5L24.69 8.01" stroke="#fff" stroke-width="1.8" stroke-linecap="round"/><path d="M16.2 16.5L27.29 11.91" stroke="#fff" stroke-width="1.8" stroke-linecap="round"/><circle cx="16.2" cy="16.5" r="3" fill="#d9663c"/></svg>
<svg class="a" style="left:1570.7px;top:167.7px;" width="11" height="6" viewBox="0 0 11 6"><path d="M0.6 0.6L5.5 5.4L10.4 0.6" fill="none" stroke="#444" stroke-width="1.2"/></svg>
<svg class="a" style="left:159.5px;top:203px;" width="12" height="8" viewBox="0 0 12 8"><path d="M0.8 0.8L5.8 6L10.8 0.8" fill="none" stroke="#333" stroke-width="1.3"/></svg>
<div class="a" style="left:186px;top:200.5px;width:2.5px;height:2.1999999999999886px;background:#444;border-radius:50%"></div>
<div class="a" style="left:186px;top:205.5px;width:2.5px;height:2.1999999999999886px;background:#444;border-radius:50%"></div>
<div class="a" style="left:186px;top:210.5px;width:2.5px;height:2.1999999999999886px;background:#444;border-radius:50%"></div>
<svg class="a" style="left:204px;top:200px;" width="14" height="13" viewBox="0 0 14 13"><path d="M1 1L12.5 12M12.5 1L1 12" stroke="#b3b3b3" stroke-width="1.1"/></svg>
<svg class="a" style="left:228px;top:200px;" width="17" height="13" viewBox="0 0 17 13"><path d="M1 7L5.5 11.5L16 1" fill="none" stroke="#b3b3b3" stroke-width="1.1"/></svg>
<svg class="a" style="left:275px;top:203.5px;" width="9.5" height="6.5" viewBox="0 0 9.5 6.5"><path d="M0.6 0.6L4.75 5.4L8.9 0.6" fill="none" stroke="#999" stroke-width="1"/></svg>
<svg class="a" style="left:1577px;top:201px;" width="11" height="7" viewBox="0 0 11 7"><path d="M0.7 6.2L5.5 0.8L10.3 6.2" fill="none" stroke="#444" stroke-width="1.2"/></svg>
<div class="a" style="left:1581px;top:246px;width:18px;height:549px;background:#fafafa;border-radius:8px"></div>
<svg class="a" style="left:1585px;top:250px;" width="10" height="8" viewBox="0 0 10 8"><path d="M5 0.5L9.5 7H0.5Z" fill="#6e6e6e"/></svg>
<div class="a" style="left:1585px;top:262.5px;width:9px;height:17.5px;background:#6e6e6e;border-radius:4.5px"></div>
<svg class="a" style="left:1585px;top:783.5px;" width="10" height="8" viewBox="0 0 10 8"><path d="M5 7L9.5 0.5H0.5Z" fill="#6e6e6e"/></svg>
<svg class="a" style="left:65px;top:832px;" width="17" height="15" viewBox="0 0 17 15"><rect x="0.7" y="0.7" width="14" height="12" fill="none" stroke="#444" stroke-width="1.1"/><path d="M0.7 3.5H14.7M3 6H7M3 8.5H6M3 11H6" stroke="#444" stroke-width="1"/><circle cx="11.5" cy="10" r="3.8" fill="#fff" stroke="#444" stroke-width="1.1"/><circle cx="11.5" cy="10" r="1.6" fill="#444"/></svg>
<svg class="a" style="left:98px;top:831px;" width="17" height="17" viewBox="0 0 17 17"><circle cx="8" cy="2.5" r="1.8" fill="none" stroke="#444" stroke-width="1.1"/><path d="M1.5 5.5L8 7L14 5.5M8 7V10.5L4 16M8 10.5L12 16" fill="none" stroke="#444" stroke-width="1.1"/><path d="M10 11L15.5 16.5M15.5 11L10 16.5" stroke="#444" stroke-width="1.1"/></svg>
<div class="a" style="left:1295px;top:828px;width:41px;height:22px;background:#e1e1e1;"></div>
<svg class="a" style="left:1308px;top:832px;" width="15" height="14" viewBox="0 0 15 14"><path d="M0.8 0.8H14.2V13.2H0.8ZM0.8 4.9H14.2M0.8 9.1H14.2M5.3 0.8V13.2M9.7 0.8V13.2" fill="none" stroke="#444" stroke-width="1.4"/></svg>
<svg class="a" style="left:1350px;top:832px;" width="15" height="14" viewBox="0 0 15 14"><rect x="0.8" y="0.8" width="13.4" height="12.4" fill="none" stroke="#444" stroke-width="1.2"/><rect x="3.3" y="3" width="8.4" height="8" fill="none" stroke="#444" stroke-width="1"/><path d="M5 5.5H10M5 7.5H10M5 9.3H10" stroke="#444" stroke-width="0.8"/></svg>
<svg class="a" style="left:1392px;top:832px;" width="15" height="14" viewBox="0 0 15 14"><rect x="0.8" y="0.8" width="13.4" height="12.4" fill="none" stroke="#444" stroke-width="1.2"/><path d="M4.5 0.8V8H10.5V0.8" fill="none" stroke="#444" stroke-width="1.2"/></svg>
<div class="a" style="left:1426px;top:838.2px;width:8px;height:1.1999999999999318px;background:#444;"></div>
<div class="a" style="left:1439.5px;top:838.6px;width:103.5px;height:0.7999999999999545px;background:#777;"></div>
<div class="a" style="left:1483.8px;top:833.8px;width:4.400000000000091px;height:10.700000000000045px;background:#555;border-radius:1px"></div>
<div class="a" style="left:1490.8px;top:836px;width:1.0px;height:6px;background:#777;"></div>
<div class="a" style="left:1548px;top:838.2px;width:8.5px;height:1.1999999999999318px;background:#444;"></div>
<div class="a" style="left:1551.6px;top:834.5px;width:1.2000000000000455px;height:8.700000000000045px;background:#444;"></div>
<svg class="a" style="left:0;top:0;overflow:visible" width="1600" height="850" font-family="Liberation Sans"><text x="30.80" textLength="57.40" lengthAdjust="spacingAndGlyphs" y="362.80" font-size="14.83" font-weight="700" fill="#0d0d0d" style="stroke:#0d0d0d;stroke-width:1.3px;stroke-linejoin:round">SHEETS</text>
<text x="94.80" textLength="38.60" lengthAdjust="spacingAndGlyphs" y="362.80" font-size="14.83" font-weight="700" fill="#0d0d0d" style="stroke:#0d0d0d;stroke-width:1.3px;stroke-linejoin:round">TECH</text>
<text x="186.70" textLength="62.60" lengthAdjust="spacingAndGlyphs" y="293.80" font-size="12.50" font-weight="700" fill="#111111">CADASTRO</text>
<text x="294.00" textLength="33.30" lengthAdjust="spacingAndGlyphs" y="293.80" font-size="12.50" font-weight="700" fill="#ffffff">DMPL</text>
<text x="373.00" textLength="67.50" lengthAdjust="spacingAndGlyphs" y="293.80" font-size="12.50" font-weight="700" fill="#111111">IMPRESSÃO</text>
<text x="481.75" textLength="73.25" lengthAdjust="spacingAndGlyphs" y="293.80" font-size="12.50" font-weight="700" fill="#111111">DASHBOARD</text>
<text x="590.75" textLength="71.75" lengthAdjust="spacingAndGlyphs" y="293.80" font-size="12.50" font-weight="700" fill="#111111">INSTRUÇÕES</text>
<text x="155.40" textLength="67.90" lengthAdjust="spacingAndGlyphs" y="341.30" font-size="12.94" font-weight="700" fill="#333333">ANO ATUAL</text>
<text x="263.00" textLength="89.20" lengthAdjust="spacingAndGlyphs" y="341.30" font-size="12.94" font-weight="700" fill="#ffffff">ANO ANTERIOR</text>
<text x="69.60" textLength="84.10" lengthAdjust="spacingAndGlyphs" y="394.00" font-size="13.52" font-weight="700" fill="#3a3a3a">Informe o Ano</text>
<text x="360.00" textLength="23.00" lengthAdjust="spacingAndGlyphs" y="393.00" font-size="10.90" font-weight="400" fill="#262626">2025</text>
<text x="856.00" textLength="83.70" lengthAdjust="spacingAndGlyphs" y="421.90" font-size="11.05" font-weight="400" fill="#262626">Valores em R$ mil</text>
<text x="69.60" textLength="34.20" lengthAdjust="spacingAndGlyphs" y="455.00" font-size="13.52" font-weight="700" fill="#3a3a3a">DMLP</text>
<text x="361.00" textLength="75.50" lengthAdjust="spacingAndGlyphs" y="455.00" font-size="13.52" font-weight="700" fill="#3a3a3a">Capital social</text>
<text x="483.40" textLength="77.20" lengthAdjust="spacingAndGlyphs" y="455.00" font-size="13.52" font-weight="700" fill="#3a3a3a">Reserva legal</text>
<text x="603.00" textLength="98.25" lengthAdjust="spacingAndGlyphs" y="455.00" font-size="13.52" font-weight="700" fill="#3a3a3a">Fundos especiais</text>
<text x="727.20" textLength="100.00" lengthAdjust="spacingAndGlyphs" y="445.80" font-size="13.52" font-weight="700" fill="#3a3a3a">Sobras ou perdas</text>
<text x="727.20" textLength="68.10" lengthAdjust="spacingAndGlyphs" y="463.60" font-size="13.52" font-weight="700" fill="#3a3a3a">acumuladas</text>
<text x="854.40" textLength="63.40" lengthAdjust="spacingAndGlyphs" y="455.00" font-size="13.52" font-weight="700" fill="#3a3a3a">Saldo atual</text>
<text x="69.60" textLength="151.20" lengthAdjust="spacingAndGlyphs" y="495.70" font-size="13.52" font-weight="700" fill="#3a3a3a">Saldo no início do período</text>
<text x="69.60" textLength="180.90" lengthAdjust="spacingAndGlyphs" y="533.20" font-size="13.52" font-weight="700" fill="#3a3a3a">Ajuste de exercícios anteriores</text>
<text x="69.60" textLength="121.20" lengthAdjust="spacingAndGlyphs" y="570.70" font-size="13.52" font-weight="700" fill="#3a3a3a">Saldo inicial ajustado</text>
<text x="69.60" textLength="136.20" lengthAdjust="spacingAndGlyphs" y="608.20" font-size="13.52" font-weight="700" fill="#3a3a3a">Realização de Reservas</text>
<text x="69.60" textLength="209.40" lengthAdjust="spacingAndGlyphs" y="645.70" font-size="13.52" font-weight="700" fill="#3a3a3a">Aumento/Redução do Capital Social</text>
<text x="69.60" textLength="121.40" lengthAdjust="spacingAndGlyphs" y="683.20" font-size="13.52" font-weight="700" fill="#3a3a3a">Ações em Tesouraria</text>
<text x="69.60" textLength="157.40" lengthAdjust="spacingAndGlyphs" y="720.70" font-size="13.52" font-weight="700" fill="#3a3a3a">Lucro/Prejuízo do Exercício</text>
<text x="360.60" textLength="59.12" lengthAdjust="spacingAndGlyphs" y="495.20" font-size="11.34" font-weight="400" fill="#1f1f1f">R$10.000,00</text>
<text x="481.90" textLength="53.25" lengthAdjust="spacingAndGlyphs" y="495.20" font-size="11.34" font-weight="400" fill="#1f1f1f">R$8.000,00</text>
<text x="602.20" textLength="53.25" lengthAdjust="spacingAndGlyphs" y="495.20" font-size="11.34" font-weight="400" fill="#1f1f1f">R$1.000,00</text>
<text x="726.25" textLength="48.73" lengthAdjust="spacingAndGlyphs" y="495.20" font-size="11.34" font-weight="400" fill="#1f1f1f">-R$500,00</text>
<text x="853.75" textLength="59.12" lengthAdjust="spacingAndGlyphs" y="495.20" font-size="11.34" font-weight="400" fill="#1f1f1f">R$18.500,00</text>
<text x="360.60" textLength="42.85" lengthAdjust="spacingAndGlyphs" y="532.70" font-size="11.34" font-weight="400" fill="#1f1f1f">-R$10,00</text>
<text x="481.90" textLength="44.48" lengthAdjust="spacingAndGlyphs" y="532.70" font-size="11.34" font-weight="400" fill="#1f1f1f">R$200,00</text>
<text x="602.20" textLength="44.48" lengthAdjust="spacingAndGlyphs" y="532.70" font-size="11.34" font-weight="400" fill="#1f1f1f">R$600,00</text>
<text x="726.25" textLength="48.73" lengthAdjust="spacingAndGlyphs" y="532.70" font-size="11.34" font-weight="400" fill="#1f1f1f">-R$100,00</text>
<text x="853.75" textLength="44.48" lengthAdjust="spacingAndGlyphs" y="532.70" font-size="11.34" font-weight="400" fill="#1f1f1f">R$690,00</text>
<text x="360.60" textLength="53.25" lengthAdjust="spacingAndGlyphs" y="570.20" font-size="11.34" font-weight="400" fill="#1f1f1f">R$9.990,00</text>
<text x="481.90" textLength="53.25" lengthAdjust="spacingAndGlyphs" y="570.20" font-size="11.34" font-weight="400" fill="#1f1f1f">R$8.200,00</text>
<text x="602.20" textLength="53.25" lengthAdjust="spacingAndGlyphs" y="570.20" font-size="11.34" font-weight="400" fill="#1f1f1f">R$1.600,00</text>
<text x="726.25" textLength="48.73" lengthAdjust="spacingAndGlyphs" y="570.20" font-size="11.34" font-weight="400" fill="#1f1f1f">-R$600,00</text>
<text x="853.75" textLength="59.12" lengthAdjust="spacingAndGlyphs" y="570.20" font-size="11.34" font-weight="400" fill="#1f1f1f">R$19.190,00</text>
<text x="360.60" textLength="59.12" lengthAdjust="spacingAndGlyphs" y="607.70" font-size="11.34" font-weight="400" fill="#1f1f1f">R$36.699,00</text>
<text x="481.90" textLength="44.48" lengthAdjust="spacingAndGlyphs" y="607.70" font-size="11.34" font-weight="400" fill="#1f1f1f">R$333,00</text>
<text x="602.20" textLength="53.25" lengthAdjust="spacingAndGlyphs" y="607.70" font-size="11.34" font-weight="400" fill="#1f1f1f">R$3.333,00</text>
<text x="726.25" textLength="32.73" lengthAdjust="spacingAndGlyphs" y="607.70" font-size="11.34" font-weight="400" fill="#1f1f1f">R$0,00</text>
<text x="853.75" textLength="59.12" lengthAdjust="spacingAndGlyphs" y="607.70" font-size="11.34" font-weight="400" fill="#1f1f1f">R$40.365,00</text>
<text x="360.60" textLength="53.25" lengthAdjust="spacingAndGlyphs" y="645.20" font-size="11.34" font-weight="400" fill="#1f1f1f">R$3.333,00</text>
<text x="481.90" textLength="44.48" lengthAdjust="spacingAndGlyphs" y="645.20" font-size="11.34" font-weight="400" fill="#1f1f1f">R$333,00</text>
<text x="853.75" textLength="53.25" lengthAdjust="spacingAndGlyphs" y="645.20" font-size="11.34" font-weight="400" fill="#1f1f1f">R$3.666,00</text>
<text x="360.60" textLength="38.60" lengthAdjust="spacingAndGlyphs" y="682.70" font-size="11.34" font-weight="400" fill="#1f1f1f">R$33,00</text>
<text x="602.20" textLength="53.25" lengthAdjust="spacingAndGlyphs" y="682.70" font-size="11.34" font-weight="400" fill="#1f1f1f">R$3.333,00</text>
<text x="853.75" textLength="53.25" lengthAdjust="spacingAndGlyphs" y="682.70" font-size="11.34" font-weight="400" fill="#1f1f1f">R$3.366,00</text>
<text x="360.60" textLength="59.12" lengthAdjust="spacingAndGlyphs" y="720.20" font-size="11.34" font-weight="400" fill="#1f1f1f">R$33.333,00</text>
<text x="853.75" textLength="59.12" lengthAdjust="spacingAndGlyphs" y="720.20" font-size="11.34" font-weight="400" fill="#1f1f1f">R$33.333,00</text>
<text x="853.75" textLength="32.73" lengthAdjust="spacingAndGlyphs" y="757.70" font-size="11.34" font-weight="400" fill="#1f1f1f">R$0,00</text>
<text x="853.75" textLength="32.73" lengthAdjust="spacingAndGlyphs" y="795.20" font-size="11.34" font-weight="400" fill="#1f1f1f">R$0,00</text>
<text x="36.50" text-anchor="middle" y="259.80" font-size="12.65" font-weight="400" fill="#1e6b41">A</text>
<text x="50.00" text-anchor="middle" y="259.80" font-size="12.65" font-weight="400" fill="#222222">B</text>
<text x="201.00" text-anchor="middle" y="259.80" font-size="12.65" font-weight="400" fill="#222222">C</text>
<text x="407.00" text-anchor="middle" y="259.80" font-size="12.65" font-weight="400" fill="#222222">D</text>
<text x="528.00" text-anchor="middle" y="259.80" font-size="12.65" font-weight="400" fill="#222222">E</text>
<text x="650.50" text-anchor="middle" y="259.80" font-size="12.65" font-weight="400" fill="#222222">F</text>
<text x="776.00" text-anchor="middle" y="259.80" font-size="12.65" font-weight="400" fill="#222222">G</text>
<text x="896.50" text-anchor="middle" y="259.80" font-size="12.65" font-weight="400" fill="#222222">H</text>
<text x="993.50" text-anchor="middle" y="259.80" font-size="12.65" font-weight="400" fill="#222222">I</text>
<text x="1073.50" text-anchor="middle" y="259.80" font-size="12.65" font-weight="400" fill="#222222">J</text>
<text x="1153.50" text-anchor="middle" y="259.80" font-size="12.65" font-weight="400" fill="#222222">K</text>
<text x="1233.50" text-anchor="middle" y="259.80" font-size="12.65" font-weight="400" fill="#222222">L</text>
<text x="1313.50" text-anchor="middle" y="259.80" font-size="12.65" font-weight="400" fill="#222222">M</text>
<text x="1393.50" text-anchor="middle" y="259.80" font-size="12.65" font-weight="400" fill="#222222">N</text>
<text x="1473.50" text-anchor="middle" y="259.80" font-size="12.65" font-weight="400" fill="#222222">O</text>
<text x="1553.50" text-anchor="middle" y="259.80" font-size="12.65" font-weight="400" fill="#222222">P</text>
<text x="14.20" text-anchor="middle" y="309.40" font-size="12.35" font-weight="400" fill="#1e6b41">1</text>
<text x="14.20" text-anchor="middle" y="347.40" font-size="12.35" font-weight="400" fill="#222222">2</text>
<text x="14.20" text-anchor="middle" y="366.40" font-size="12.35" font-weight="400" fill="#222222">3</text>
<text x="14.20" text-anchor="middle" y="404.40" font-size="12.35" font-weight="400" fill="#222222">4</text>
<text x="14.20" text-anchor="middle" y="423.40" font-size="12.35" font-weight="400" fill="#222222">5</text>
<text x="14.20" text-anchor="middle" y="468.40" font-size="12.35" font-weight="400" fill="#222222">6</text>
<text x="14.20" text-anchor="middle" y="505.40" font-size="12.35" font-weight="400" fill="#222222">7</text>
<text x="14.20" text-anchor="middle" y="543.40" font-size="12.35" font-weight="400" fill="#222222">8</text>
<text x="14.20" text-anchor="middle" y="580.40" font-size="12.35" font-weight="400" fill="#222222">9</text>
<text x="14.20" text-anchor="middle" y="618.40" font-size="12.35" font-weight="400" fill="#222222">10</text>
<text x="14.20" text-anchor="middle" y="655.40" font-size="12.35" font-weight="400" fill="#222222">11</text>
<text x="14.20" text-anchor="middle" y="693.40" font-size="12.35" font-weight="400" fill="#222222">12</text>
<text x="14.20" text-anchor="middle" y="730.40" font-size="12.35" font-weight="400" fill="#222222">13</text>
<text x="14.20" text-anchor="middle" y="768.40" font-size="12.35" font-weight="400" fill="#222222">14</text>
<text x="50.75" textLength="113.50" lengthAdjust="spacingAndGlyphs" y="29.20" font-size="11.34" font-weight="400" fill="#ffffff">Salvamento Automático</text>
<text x="376.60" textLength="230.20" lengthAdjust="spacingAndGlyphs" y="29.60" font-size="12.72" font-weight="400" fill="#eaf6ee">Planilha Modelo DMPL Contabilidade v08</text>
<text x="688.75" textLength="58.75" lengthAdjust="spacingAndGlyphs" y="29.50" font-size="15.26" font-weight="400" fill="#3a3a3a">Pesquisar</text>
<text x="1417.50" textLength="15.00" lengthAdjust="spacingAndGlyphs" y="28.80" font-size="10.47" font-weight="400" fill="#f0f0f0">BM</text>
<text x="8.00" textLength="48.25" lengthAdjust="spacingAndGlyphs" y="71.80" font-size="15.41" font-weight="400" fill="#242424">Arquivo</text>
<text x="70.50" textLength="83.75" lengthAdjust="spacingAndGlyphs" y="71.80" font-size="15.41" fill="#1f1f1f" font-weight="400" style="stroke:#1f1f1f;stroke-width:0.25px">Página Inicial</text>
<text x="174.25" textLength="38.75" lengthAdjust="spacingAndGlyphs" y="71.80" font-size="15.41" font-weight="400" fill="#242424">Inserir</text>
<text x="234.25" textLength="108.25" lengthAdjust="spacingAndGlyphs" y="71.80" font-size="15.41" font-weight="400" fill="#242424">Layout da Página</text>
<text x="365.50" textLength="57.00" lengthAdjust="spacingAndGlyphs" y="71.80" font-size="15.41" font-weight="400" fill="#242424">Fórmulas</text>
<text x="443.00" textLength="39.50" lengthAdjust="spacingAndGlyphs" y="71.80" font-size="15.41" font-weight="400" fill="#242424">Dados</text>
<text x="503.75" textLength="46.75" lengthAdjust="spacingAndGlyphs" y="71.80" font-size="15.41" font-weight="400" fill="#242424">Revisão</text>
<text x="572.50" textLength="34.00" lengthAdjust="spacingAndGlyphs" y="71.80" font-size="15.41" font-weight="400" fill="#242424">Exibir</text>
<text x="627.00" textLength="77.50" lengthAdjust="spacingAndGlyphs" y="71.80" font-size="15.41" font-weight="400" fill="#242424">Automatizar</text>
<text x="726.25" textLength="92.75" lengthAdjust="spacingAndGlyphs" y="71.80" font-size="15.41" font-weight="400" fill="#242424">Desenvolvedor</text>
<text x="840.00" textLength="36.25" lengthAdjust="spacingAndGlyphs" y="71.80" font-size="15.41" font-weight="400" fill="#242424">Ajuda</text>
<text x="897.50" textLength="73.75" lengthAdjust="spacingAndGlyphs" y="71.80" font-size="15.41" font-weight="400" fill="#242424">Power Pivot</text>
<text x="1332.00" textLength="80.00" lengthAdjust="spacingAndGlyphs" y="71.25" font-size="15.41" font-weight="400" fill="#242424">Comentários</text>
<text x="1450.00" textLength="119.50" lengthAdjust="spacingAndGlyphs" y="71.25" font-size="15.41" font-weight="400" fill="#ffffff">Compartilhamento</text>
<text x="16.20" textLength="88.30" lengthAdjust="spacingAndGlyphs" y="178.80" font-size="11.92" font-weight="400" fill="#3b3b3b">Área de Transfer...</text>
<text x="226.00" textLength="26.30" lengthAdjust="spacingAndGlyphs" y="178.80" font-size="11.92" font-weight="400" fill="#3b3b3b">Fonte</text>
<text x="436.00" textLength="59.40" lengthAdjust="spacingAndGlyphs" y="178.80" font-size="11.92" font-weight="400" fill="#3b3b3b">Alinhamento</text>
<text x="635.60" textLength="38.90" lengthAdjust="spacingAndGlyphs" y="178.80" font-size="11.92" font-weight="400" fill="#3b3b3b">Número</text>
<text x="855.90" textLength="30.10" lengthAdjust="spacingAndGlyphs" y="178.80" font-size="11.92" font-weight="400" fill="#3b3b3b">Estilos</text>
<text x="1036.40" textLength="33.30" lengthAdjust="spacingAndGlyphs" y="178.80" font-size="11.92" font-weight="400" fill="#3b3b3b">Células</text>
<text x="1195.80" textLength="32.10" lengthAdjust="spacingAndGlyphs" y="178.80" font-size="11.92" font-weight="400" fill="#3b3b3b">Edição</text>
<text x="1329.60" textLength="61.60" lengthAdjust="spacingAndGlyphs" y="178.80" font-size="11.92" font-weight="400" fill="#3b3b3b">Suplementos</text>
<text x="1411.40" textLength="83.80" lengthAdjust="spacingAndGlyphs" y="178.80" font-size="11.92" font-weight="400" fill="#3b3b3b">Commands Gro...</text>
<text x="1514.00" textLength="32.00" lengthAdjust="spacingAndGlyphs" y="178.80" font-size="11.92" font-weight="400" fill="#3b3b3b">Claude</text>
<text x="28.80" textLength="28.20" lengthAdjust="spacingAndGlyphs" y="138.10" font-size="12.35" font-weight="400" fill="#242424">Colar</text>
<text x="137.80" textLength="35.40" lengthAdjust="spacingAndGlyphs" y="110.80" font-size="13.52" font-weight="400" fill="#242424">Calibri</text>
<text x="259.70" textLength="11.30" lengthAdjust="spacingAndGlyphs" y="110.80" font-size="13.52" font-weight="400" fill="#242424">12</text>
<text x="315.70" textLength="10.80" lengthAdjust="spacingAndGlyphs" y="110.80" font-size="18.90" font-weight="400" fill="#333">A</text>
<text x="343.70" textLength="9.00" lengthAdjust="spacingAndGlyphs" y="110.80" font-size="13.08" font-weight="400" fill="#333">A</text>
<text x="141.70" textLength="10.50" lengthAdjust="spacingAndGlyphs" y="142.75" font-size="14.17" font-weight="700" fill="#242424">N</text>
<text x="167.50" y="142.75" font-size="14.17" font-weight="400" fill="#333" font-family="Liberation Serif,serif" font-style="italic">I</text>
<text x="197.50" textLength="7.00" lengthAdjust="spacingAndGlyphs" y="142.75" font-size="14.17" font-weight="400" fill="#333">S</text>
<text x="328.70" textLength="9.50" lengthAdjust="spacingAndGlyphs" y="141.70" font-size="14.83" font-weight="400" fill="#333">A</text>
<text x="592.10" textLength="27.90" lengthAdjust="spacingAndGlyphs" y="110.50" font-size="12.65" font-weight="400" fill="#242424">Geral</text>
<text x="636.20" textLength="16.20" lengthAdjust="spacingAndGlyphs" y="146.70" font-size="21.08" font-weight="400" fill="#4a4a4a">%</text>
<text x="662.80" textLength="16.10" lengthAdjust="spacingAndGlyphs" y="142.70" font-size="10.76" font-weight="400" fill="#8a8a8a">000</text>
<text x="764.70" textLength="64.80" lengthAdjust="spacingAndGlyphs" y="136.40" font-size="12.65" font-weight="400" fill="#242424">Formatação</text>
<text x="759.00" textLength="64.60" lengthAdjust="spacingAndGlyphs" y="153.00" font-size="12.65" font-weight="400" fill="#242424">Condicional</text>
<text x="843.10" textLength="83.70" lengthAdjust="spacingAndGlyphs" y="136.40" font-size="12.65" font-weight="400" fill="#242424">Formatar como</text>
<text x="862.00" textLength="34.10" lengthAdjust="spacingAndGlyphs" y="153.00" font-size="12.65" font-weight="400" fill="#242424">Tabela</text>
<text x="934.90" textLength="51.10" lengthAdjust="spacingAndGlyphs" y="136.40" font-size="12.65" font-weight="400" fill="#242424">Estilos de</text>
<text x="937.70" textLength="33.60" lengthAdjust="spacingAndGlyphs" y="153.00" font-size="12.65" font-weight="400" fill="#242424">Célula</text>
<text x="1031.20" textLength="32.60" lengthAdjust="spacingAndGlyphs" y="102.50" font-size="13.37" font-weight="400" fill="#242424">Inserir</text>
<text x="1031.20" textLength="34.80" lengthAdjust="spacingAndGlyphs" y="128.90" font-size="13.37" font-weight="400" fill="#242424">Excluir</text>
<text x="1031.20" textLength="49.50" lengthAdjust="spacingAndGlyphs" y="155.70" font-size="13.37" font-weight="400" fill="#242424">Formatar</text>
<text x="1125.50" textLength="12.75" lengthAdjust="spacingAndGlyphs" y="104.60" font-size="20.78" font-weight="400" fill="#444">Σ</text>
<text x="1186.40" textLength="10.00" lengthAdjust="spacingAndGlyphs" y="103.75" font-size="17.81" font-weight="400" fill="#2f8fd0">A</text>
<text x="1186.75" textLength="8.35" lengthAdjust="spacingAndGlyphs" y="118.40" font-size="17.59" font-weight="400" fill="#444">Z</text>
<text x="1173.90" textLength="54.10" lengthAdjust="spacingAndGlyphs" y="136.50" font-size="12.65" font-weight="400" fill="#242424">Classificar</text>
<text x="1174.50" textLength="41.25" lengthAdjust="spacingAndGlyphs" y="152.75" font-size="12.65" font-weight="400" fill="#242424">e Filtrar</text>
<text x="1240.75" textLength="58.15" lengthAdjust="spacingAndGlyphs" y="136.50" font-size="12.65" font-weight="400" fill="#242424">Localizar e</text>
<text x="1235.75" textLength="56.25" lengthAdjust="spacingAndGlyphs" y="152.75" font-size="12.65" font-weight="400" fill="#242424">Selecionar</text>
<text x="1326.00" textLength="71.00" lengthAdjust="spacingAndGlyphs" y="137.10" font-size="12.94" font-weight="400" fill="#242424">Suplementos</text>
<text x="1420.90" textLength="67.50" lengthAdjust="spacingAndGlyphs" y="137.10" font-size="12.94" font-weight="400" fill="#242424">Numerous.ai</text>
<text x="1516.30" textLength="28.80" lengthAdjust="spacingAndGlyphs" y="137.10" font-size="12.94" font-weight="400" fill="#242424">Open</text>
<text x="1511.80" textLength="37.80" lengthAdjust="spacingAndGlyphs" y="153.30" font-size="12.94" font-weight="400" fill="#242424">Claude</text>
<text x="14.25" textLength="15.25" lengthAdjust="spacingAndGlyphs" y="211.25" font-size="13.37" font-weight="400" fill="#242424">A1</text>
<text x="253.50" y="211.50" font-size="14.53" font-weight="700" fill="#333" font-family="Liberation Serif,serif" font-style="italic">fx</text>
<text x="11.40" textLength="32.10" lengthAdjust="spacingAndGlyphs" y="844.00" font-size="12.06" font-weight="400" fill="#333">Pronto</text>
<text x="117.60" textLength="130.80" lengthAdjust="spacingAndGlyphs" y="844.00" font-size="12.06" font-weight="700" fill="#333">Acessibilidade: investigar</text>
<text x="1570.00" textLength="20.00" lengthAdjust="spacingAndGlyphs" y="843.75" font-size="12.06" font-weight="400" fill="#333">90%</text></svg>
<div class="a" style="left:0px;top:795px;width:1600px;height:32px;background:linear-gradient(#e3e3e5,#e8e8ea);"></div>
<div class="a" style="left:44px;top:801px;width:1534px;height:18px;background:#f7f7f7;border-radius:9px"></div>
<div class="a" style="left:60px;top:806px;width:1481px;height:9px;background:#6e6e6e;border-radius:5px"></div>
<svg class="a" style="left:47px;top:806px" width="8" height="10"><path d="M0.5 5L7 0.5V9.5Z" fill="#6e6e6e"/></svg>
<svg class="a" style="left:1566px;top:805.5px" width="8" height="10"><path d="M7.5 5L1 0.5V9.5Z" fill="#6e6e6e"/></svg>
<div class="a" style="left:24.5px;top:805.9px;width:2.3000000000000007px;height:2.2000000000000455px;background:#444;border-radius:50%"></div>
<div class="a" style="left:24.5px;top:810.4px;width:2.3000000000000007px;height:2.2000000000000455px;background:#444;border-radius:50%"></div>
<div class="a" style="left:24.5px;top:814.9px;width:2.3000000000000007px;height:2.2000000000000455px;background:#444;border-radius:50%"></div>
</body></html>
